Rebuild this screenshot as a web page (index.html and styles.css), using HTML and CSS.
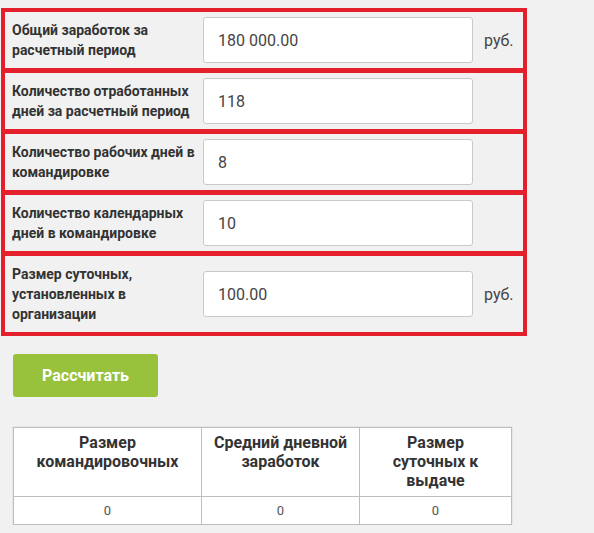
FILE: index.html
```html
<!DOCTYPE html>
<html lang="ru">
<head>
<meta charset="utf-8">
<title>Калькулятор командировочных</title>
<link rel="stylesheet" href="styles.css">
</head>
<body>
<div class="page">
  <div class="form">
    <div class="row">
      <div class="label">Общий заработок за расчетный период</div>
      <div class="field">180 000.00</div>
      <div class="unit">руб.</div>
    </div>
    <div class="row">
      <div class="label">Количество отработанных дней за расчетный период</div>
      <div class="field">118</div>
    </div>
    <div class="row">
      <div class="label">Количество рабочих дней в командировке</div>
      <div class="field">8</div>
    </div>
    <div class="row">
      <div class="label">Количество календарных дней в командировке</div>
      <div class="field">10</div>
    </div>
    <div class="row">
      <div class="label">Размер суточных, установленных в организации</div>
      <div class="field">100.00</div>
      <div class="unit">руб.</div>
    </div>
  </div>
  <div class="actions">
    <button class="btn">Рассчитать</button>
  </div>
  <table class="result">
    <thead>
      <tr>
        <th class="c1">Размер командировочных</th>
        <th class="c2">Средний дневной заработок</th>
        <th class="c3">Размер суточных к выдаче</th>
      </tr>
    </thead>
    <tbody>
      <tr>
        <td>0</td>
        <td>0</td>
        <td>0</td>
      </tr>
    </tbody>
  </table>
</div>
</body>
</html>
```
FILE: styles.css
```css
html, body {
  margin: 0;
  padding: 0;
  background: #f1f1f1;
  font-family: Roboto, "Liberation Sans", Arial, sans-serif;
  color: #333;
}

.page {
  padding-top: 8px;
}

.form {
  width: 526px;
  margin-left: 1px;
}

.row {
  display: flex;
  align-items: center;
  border: 4px solid #e3202b;
  padding: 5px 0 5px 7px;
  margin-top: -3px;
}

.row:first-child {
  margin-top: 0;
}

.label {
  flex: 0 0 187px;
  padding: 3px 4px 3px 0;
  font-size: 14px;
  font-weight: bold;
  line-height: 20px;
  color: #333;
}

.field {
  box-sizing: border-box;
  width: 270px;
  height: 46px;
  background: #fff;
  border: 1px solid #c9c9c9;
  border-radius: 3px;
  padding: 0 14px;
  display: flex;
  align-items: center;
  font-size: 16px;
  color: #444;
}

.unit {
  margin-left: 11px;
  font-size: 16px;
  color: #444;
}

.actions {
  margin: 18px 0 0 13px;
}

.btn {
  width: 145px;
  height: 43px;
  border: none;
  border-radius: 3px;
  background: #98c23b;
  color: #fff;
  font-family: Roboto, "Liberation Sans", Arial, sans-serif;
  font-size: 16px;
  font-weight: bold;
  padding: 0;
}

.result {
  margin: 30px 0 0 13px;
  width: 499px;
  border-collapse: collapse;
  background: #fff;
  border: 1px solid #bdbdbd;
  box-shadow: 0 0 0 1px #e6e6e6;
}

.result th,
.result td {
  border: 1px solid #bdbdbd;
  text-align: center;
}

.result th {
  vertical-align: top;
  font-size: 16px;
  font-weight: bold;
  line-height: 19px;
  padding: 5px 6px 6px;
  height: 54px;
  color: #333;
}

.result .c1 { width: 175px; }
.result .c2 { width: 145px; }
.result .c3 { padding-left: 14px; padding-right: 14px; }

.result td {
  font-size: 13px;
  color: #555;
  height: 27px;
  padding: 0;
}
```
